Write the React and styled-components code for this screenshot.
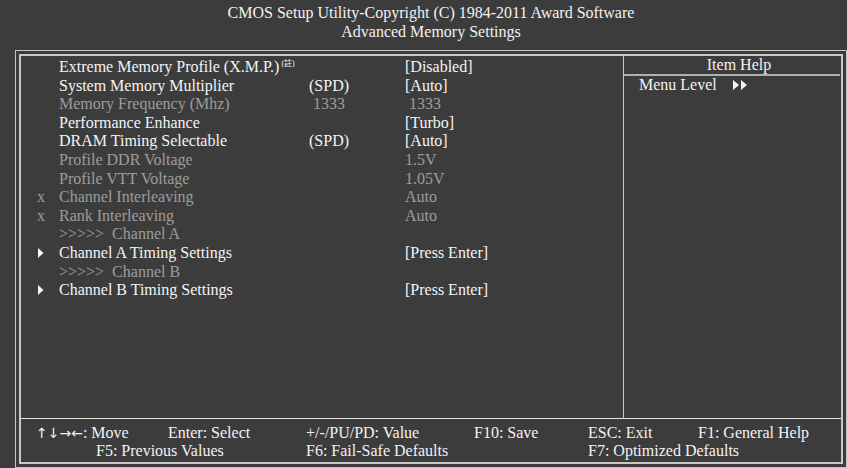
import React from "react";
import styled, { createGlobalStyle } from "styled-components";

const Global = createGlobalStyle`
  html, body {
    margin: 0;
    padding: 0;
    background: #3c3c3c;
  }
  body {
    font-family: "Liberation Serif", "Times New Roman", serif;
    font-size: 16px;
    color: #f2f2f2;
  }
`;

const Page = styled.div`
  width: 847px;
  height: 468px;
  background: #3c3c3c;
  overflow: hidden;
`;

const Header = styled.header`
  margin-left: 15px;
  width: 832px;
  height: 50px;
  box-sizing: border-box;
  padding-top: 3px;
  text-align: center;
  line-height: 19px;
  color: #f2f2f2;
`;

const OuterFrame = styled.div`
  margin-left: 15px;
  width: 832px;
  height: 418px;
  box-sizing: border-box;
  border: 1px solid #c4c4c4;
  padding: 3px;
`;

const InnerFrame = styled.div`
  height: 100%;
  box-sizing: border-box;
  border: 2px solid #c8c8c8;
  display: flex;
  flex-direction: column;
`;

const Main = styled.div`
  flex: 1;
  display: flex;
  min-height: 0;
`;

const ListPane = styled.div`
  width: 603px;
  box-sizing: border-box;
  border-right: 1px solid #c4c4c4;
  padding: 2px 0 0 16px;
`;

const Row = styled.div`
  display: grid;
  grid-template-columns: 22px 250px 96px 1fr;
  height: 18.6px;
  line-height: 18.6px;
  white-space: pre;
  color: ${(p) => (p.$dim ? "#9c9c9c" : "#f4f4f4")};
`;

const Marker = styled.span`
  display: flex;
  align-items: center;
  padding-left: ${(p) => (p.$arrow ? "1px" : "0")};
  color: #9c9c9c;
`;

const Sup = styled.sup`
  font-family: "Liberation Serif", "Noto Sans CJK TC", serif;
  font-size: 8px;
  line-height: 0;
  vertical-align: 6px;
  margin-left: 2px;
`;

const HelpPane = styled.div`
  flex: 1;
  display: flex;
  flex-direction: column;
`;

const HelpTitle = styled.div`
  height: 18px;
  line-height: 18px;
  text-align: center;
  padding-left: 14px;
  border-bottom: 2px solid #b0b0b0;
  margin-right: 1px;
`;

const HelpLine = styled.div`
  display: flex;
  align-items: center;
  height: 18px;
  line-height: 18px;
  padding-left: 15px;
  gap: 16px;
`;

const Footer = styled.footer`
  flex-shrink: 0;
  height: 42px;
  box-sizing: border-box;
  border-top: 1px solid #e2e2e2;
  padding: 5px 0 0 15px;
  display: grid;
  grid-template-columns: 132px 138px 168px 114px 110px 1fr;
  grid-auto-rows: 18px;
  line-height: 18px;
  white-space: nowrap;
  margin-bottom: 2px;
`;

const Key = styled.span`
  grid-column: ${(p) => p.$col || "auto"};
  padding-left: ${(p) => p.$indent || 0}px;
`;

const Arrows = styled.span`
  font-family: "DejaVu Sans", "Liberation Sans", sans-serif;
  font-size: 14px;
`;

const Tri = () => (
  <svg width="6" height="10" viewBox="0 0 6 10">
    <polygon points="0,0 5.5,5 0,10" fill="#f4f4f4" />
  </svg>
);

const DoubleTri = () => (
  <svg width="15" height="10" viewBox="0 0 15 10">
    <polygon points="0,0 6,5 0,10" fill="#f4f4f4" />
    <polygon points="8,0 14,5 8,10" fill="#f4f4f4" />
  </svg>
);

const rows = [
  { label: "Extreme Memory Profile (X.M.P.)", sup: true, mid: "", value: "[Disabled]" },
  { label: "System Memory Multiplier", mid: "(SPD)", value: "[Auto]" },
  { label: "Memory Frequency (Mhz)", mid: " 1333", value: " 1333", dim: true },
  { label: "Performance Enhance", mid: "", value: "[Turbo]" },
  { label: "DRAM Timing Selectable", mid: "(SPD)", value: "[Auto]" },
  { label: "Profile DDR Voltage", mid: "", value: "1.5V", dim: true },
  { label: "Profile VTT Voltage", mid: "", value: "1.05V", dim: true },
  { marker: "x", label: "Channel Interleaving", mid: "", value: "Auto", dim: true },
  { marker: "x", label: "Rank Interleaving", mid: "", value: "Auto", dim: true },
  { label: ">>>>>  Channel A", mid: "", value: "", dim: true },
  { marker: "tri", label: "Channel A Timing Settings", mid: "", value: "[Press Enter]" },
  { label: ">>>>>  Channel B", mid: "", value: "", dim: true },
  { marker: "tri", label: "Channel B Timing Settings", mid: "", value: "[Press Enter]" },
];

export default function App() {
  return (
    <>
      <Global />
      <Page>
        <Header>
          <div>CMOS Setup Utility-Copyright (C) 1984-2011 Award Software</div>
          <div>Advanced Memory Settings</div>
        </Header>
        <OuterFrame>
          <InnerFrame>
            <Main>
              <ListPane>
                {rows.map((r, i) => (
                  <Row key={i} $dim={r.dim}>
                    <Marker $arrow={r.marker === "tri"}>
                      {r.marker === "tri" ? <Tri /> : r.marker || ""}
                    </Marker>
                    <span>
                      {r.label}
                      {r.sup && <Sup>(註)</Sup>}
                    </span>
                    <span>{r.mid}</span>
                    <span>{r.value}</span>
                  </Row>
                ))}
              </ListPane>
              <HelpPane>
                <HelpTitle>Item Help</HelpTitle>
                <HelpLine>
                  <span>Menu Level</span>
                  <DoubleTri />
                </HelpLine>
              </HelpPane>
            </Main>
            <Footer>
              <Key>
                <Arrows>↑↓→←</Arrows>: Move
              </Key>
              <Key>Enter: Select</Key>
              <Key>+/-/PU/PD: Value</Key>
              <Key>F10: Save</Key>
              <Key>ESC: Exit</Key>
              <Key>F1: General Help</Key>
              <Key $col="1 / span 2" $indent={60}>F5: Previous Values</Key>
              <Key $col="3 / span 2">F6: Fail-Safe Defaults</Key>
              <Key $col="5 / span 2">F7: Optimized Defaults</Key>
            </Footer>
          </InnerFrame>
        </OuterFrame>
      </Page>
    </>
  );
}
